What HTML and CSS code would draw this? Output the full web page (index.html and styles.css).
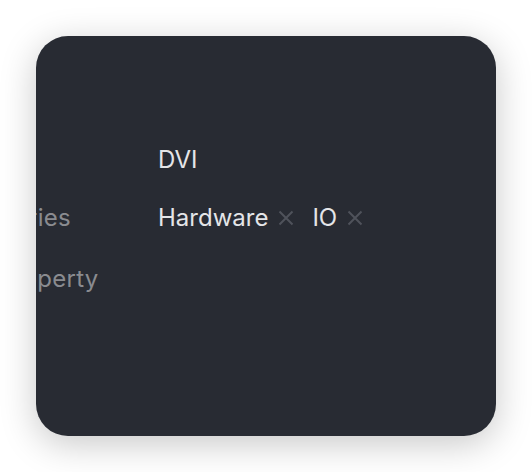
FILE: index.html
```html
<!DOCTYPE html>
<html>
<head>
<meta charset="utf-8">
<link rel="stylesheet" href="styles.css">
</head>
<body>
<div class="card">
  <div class="form">
    <div class="label">ID</div>
    <div class="value">DVI</div>
    <div class="label">Series</div>
    <div class="value tags">
      <span class="tag">Hardware<svg class="x" width="16" height="16" viewBox="0 0 16 16"><path d="M1.5 1.5 L14.5 14.5 M14.5 1.5 L1.5 14.5" stroke="#4f525b" stroke-width="2" fill="none"/></svg></span>
      <span class="tag">IO<svg class="x" width="16" height="16" viewBox="0 0 16 16"><path d="M1.5 1.5 L14.5 14.5 M14.5 1.5 L1.5 14.5" stroke="#4f525b" stroke-width="2" fill="none"/></svg></span>
    </div>
    <div class="label last">Property</div>
    <div class="value last"></div>
  </div>
</div>
</body>
</html>
```
FILE: styles.css
```css
html, body {
  margin: 0;
  background: #ffffff;
}
body {
  padding: 36px;
  font-family: Inter, "Noto Sans", sans-serif;
}
.card {
  width: 460px;
  height: 400px;
  box-sizing: border-box;
  background: #282b33;
  border-radius: 32px;
  box-shadow: 0 8px 36px rgba(0, 0, 0, 0.22);
  overflow: hidden;
  padding-top: 109px;
}
.form {
  display: grid;
  grid-template-columns: 160px 1fr;
  row-gap: 29px;
  margin-left: -38px;
  font-size: 24px;
  line-height: 29px;
}
.label {
  color: #8a8b90;
  white-space: nowrap;
  letter-spacing: 0.3px;
}
.value {
  color: #e4e5e8;
  min-height: 29px;
}
.last {
  margin-top: 3px;
}
.tags {
  display: flex;
  gap: 18px;
}
.tag {
  display: flex;
  align-items: center;
  gap: 10px;
}
.x {
  margin-top: 1px;
}
```
